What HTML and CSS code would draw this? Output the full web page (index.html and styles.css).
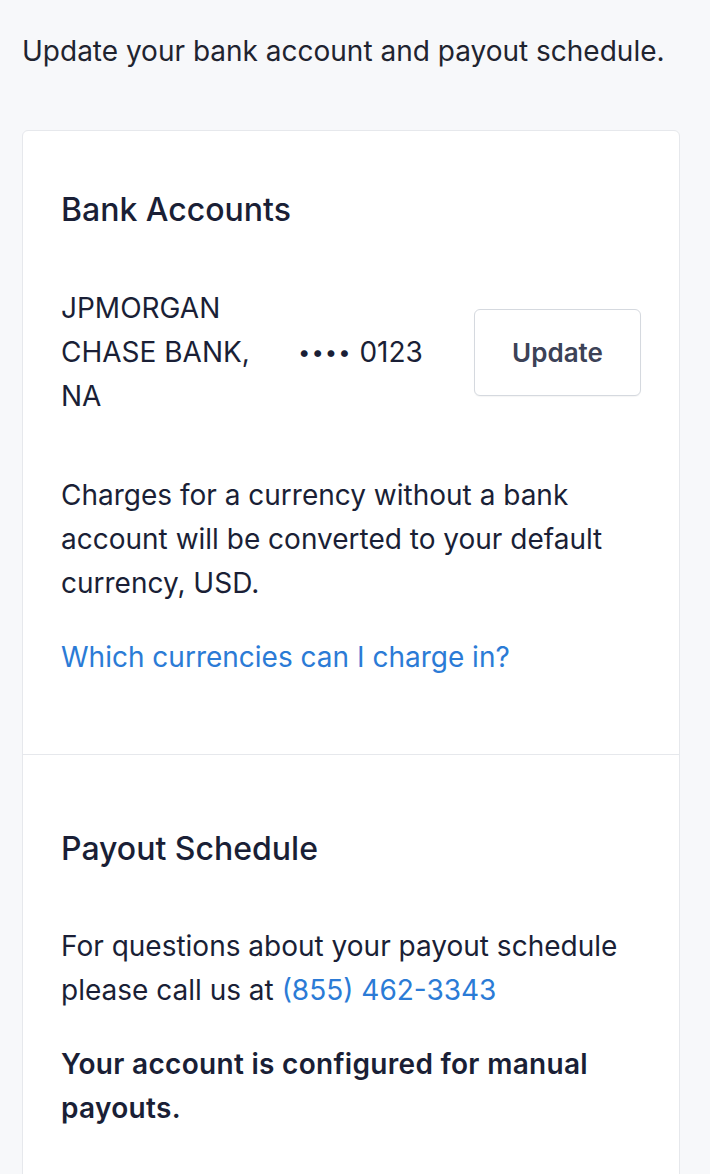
FILE: index.html
```html
<!DOCTYPE html>
<html lang="en">

<head>
    <meta charset="UTF-8">
    <meta name="viewport" content="width=device-width, initial-scale=1.0">
    <title>Bank accounts and scheduling</title>
    <link rel="stylesheet" href="styles.css">
</head>

<body>
    <p class="intro">Update your bank account and payout schedule.</p>

    <div class="card">
        <div class="section">
            <h3 class="title">Bank Accounts</h3>
            <div class="bank-row">
                <div class="bank-name">JPMORGAN CHASE BANK, NA</div>
                <div class="bank-number"><span class="dots">&bull;&bull;&bull;&bull;</span> 0123</div>
                <button class="btn">Update</button>
            </div>
            <p class="text">Charges for a currency without a bank account will be converted to your default currency, USD.</p>
            <p class="text link-line"><a href="#">Which currencies can I charge in?</a></p>
        </div>

        <div class="section section-payout">
            <h3 class="title">Payout Schedule</h3>
            <p class="text">For questions about your payout schedule please call us at <a href="#">(855) 462-3343</a></p>
            <p class="text strong">Your account is configured for manual payouts.</p>
        </div>
    </div>
</body>

</html>
```

FILE: styles.css
```css
body {
    margin: 0;
    padding: 29px 0 0 22px;
    background: #f7f8fa;
    color: #1a1f36;
    font-family: Inter, "Noto Sans", sans-serif;
}

p {
    margin: 0;
}

a {
    color: #2b7bd6;
    text-decoration: none;
}

.intro {
    font-size: 28px;
    line-height: 44px;
    color: #1f2430;
}

.card {
    width: 656px;
    margin-top: 57px;
    background: #fff;
    border: 1px solid #e6e8ec;
    border-radius: 6px;
}

.section {
    padding: 61px 38px 75px;
}

.section-payout {
    padding-top: 76px;
    border-top: 1px solid #e6e8ec;
}

.title {
    margin: 0 0 58px;
    font-size: 32px;
    line-height: 36px;
    font-weight: 500;
}

.section-payout .title {
    margin-bottom: 57px;
}

.text {
    font-size: 28px;
    line-height: 44px;
}

.link-line,
.strong {
    margin-top: 30px;
}

.strong {
    font-weight: 600;
    letter-spacing: 0.3px;
}

.bank-row {
    display: grid;
    grid-template-columns: 200px 1fr 167px;
    column-gap: 37px;
    align-items: center;
    margin-bottom: 55px;
    font-size: 28px;
    line-height: 44px;
}

.bank-number {
    white-space: nowrap;
}

.dots {
    font-size: 22px;
    letter-spacing: 1px;
    vertical-align: 2px;
}

.btn {
    height: 87px;
    border: 1px solid #d5d9df;
    border-radius: 6px;
    background: #fff;
    color: #3c4257;
    font-family: inherit;
    font-size: 26px;
    font-weight: 600;
    box-shadow: 0 1px 1px rgba(0, 0, 0, 0.04);
}
```
